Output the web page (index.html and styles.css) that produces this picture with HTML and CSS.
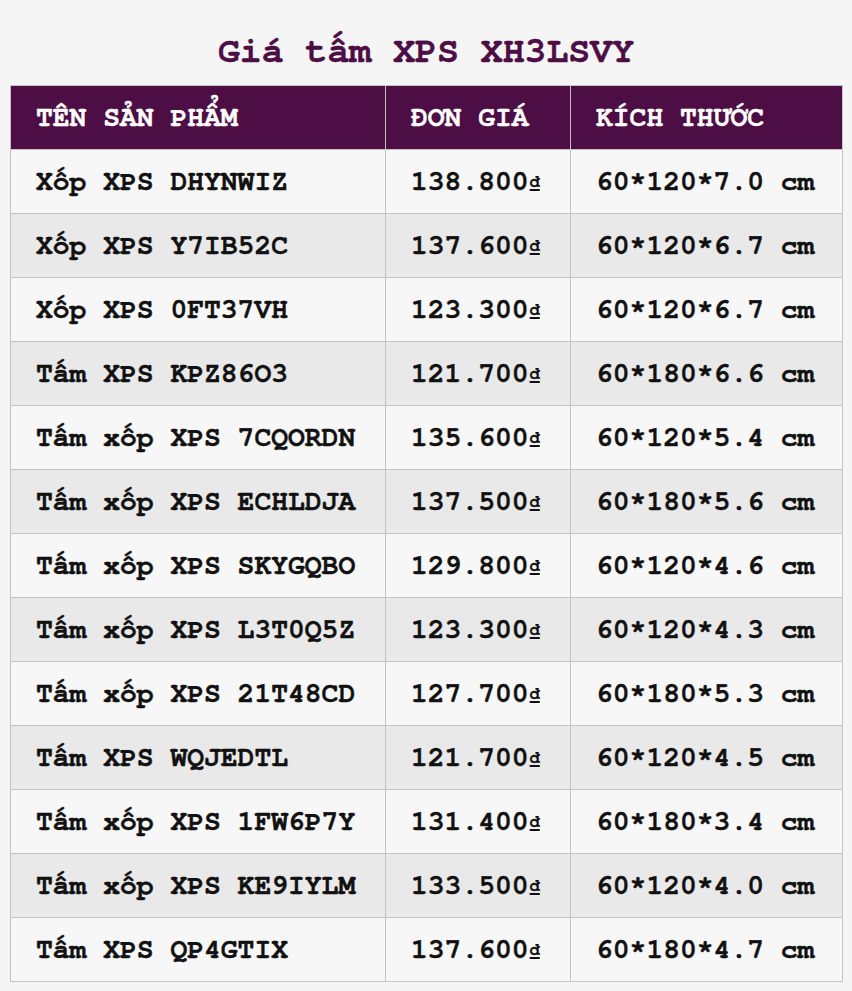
FILE: index.html
```html
<!DOCTYPE html>
<html lang="vi">
<head>
<meta charset="utf-8">
<title>Giá tấm XPS XH3LSVY</title>
<link rel="stylesheet" href="styles.css">
</head>
<body>
<h1 class="title">Giá tấm XPS XH3LSVY</h1>
<table class="price-table">
  <colgroup>
    <col class="col-name">
    <col class="col-price">
    <col class="col-size">
  </colgroup>
  <thead>
    <tr><th>TÊN SẢN PHẨM</th><th>ĐƠN GIÁ</th><th>KÍCH THƯỚC</th></tr>
  </thead>
  <tbody>
    <tr><td>Xốp XPS DHYNWIZ</td><td>138.800<span class="cur">đ</span></td><td>60*120*7.0 cm</td></tr>
    <tr><td>Xốp XPS Y7IB52C</td><td>137.600<span class="cur">đ</span></td><td>60*120*6.7 cm</td></tr>
    <tr><td>Xốp XPS 0FT37VH</td><td>123.300<span class="cur">đ</span></td><td>60*120*6.7 cm</td></tr>
    <tr><td>Tấm XPS KPZ86O3</td><td>121.700<span class="cur">đ</span></td><td>60*180*6.6 cm</td></tr>
    <tr><td>Tấm xốp XPS 7CQORDN</td><td>135.600<span class="cur">đ</span></td><td>60*120*5.4 cm</td></tr>
    <tr><td>Tấm xốp XPS ECHLDJA</td><td>137.500<span class="cur">đ</span></td><td>60*180*5.6 cm</td></tr>
    <tr><td>Tấm xốp XPS SKYGQBO</td><td>129.800<span class="cur">đ</span></td><td>60*120*4.6 cm</td></tr>
    <tr><td>Tấm xốp XPS L3T0Q5Z</td><td>123.300<span class="cur">đ</span></td><td>60*120*4.3 cm</td></tr>
    <tr><td>Tấm xốp XPS 21T48CD</td><td>127.700<span class="cur">đ</span></td><td>60*180*5.3 cm</td></tr>
    <tr><td>Tấm XPS WQJEDTL</td><td>121.700<span class="cur">đ</span></td><td>60*120*4.5 cm</td></tr>
    <tr><td>Tấm xốp XPS 1FW6P7Y</td><td>131.400<span class="cur">đ</span></td><td>60*180*3.4 cm</td></tr>
    <tr><td>Tấm xốp XPS KE9IYLM</td><td>133.500<span class="cur">đ</span></td><td>60*120*4.0 cm</td></tr>
    <tr><td>Tấm XPS QP4GTIX</td><td>137.600<span class="cur">đ</span></td><td>60*180*4.7 cm</td></tr>
  </tbody>
</table>
</body>
</html>
```
FILE: styles.css
```css
html, body {
  margin: 0;
  padding: 0;
  background: #f5f5f5;
}
body {
  padding: 0 10px;
  font-family: "TeX Gyre Cursor", "Liberation Mono", "Courier New", monospace;
  font-weight: bold;
  color: #111;
  -webkit-text-stroke: 0.4px currentColor;
}
.title {
  margin: 0;
  padding: 27px 0 17px;
  font-size: 36.5px;
  line-height: 41px;
  text-align: center;
  color: #4d0d45;
  font-weight: bold;
}
.price-table {
  width: 832px;
  border-collapse: collapse;
  table-layout: fixed;
  font-size: 28px;
  line-height: 31px;
}
.col-name { width: 375px; }
.col-price { width: 185px; }
.col-size { width: 272px; }
.price-table th,
.price-table td {
  border: 1px solid #c4c4c4;
  padding: 14px 24px 18px 25px;
  text-align: left;
  white-space: nowrap;
}
.price-table th {
  background: #4d0d45;
  color: #fff;
  font-weight: bold;
}
.price-table tbody tr:nth-child(odd) td { background: #f7f7f7; }
.price-table tbody tr:nth-child(even) td { background: #e9e9e9; }
.cur {
  font-size: 17px;
  line-height: 0;
  vertical-align: 3px;
  margin-left: 1px;
  text-decoration: underline;
  text-decoration-thickness: 2px;
  text-underline-offset: 2px;
  -webkit-text-stroke: 0.3px currentColor;
}
```
